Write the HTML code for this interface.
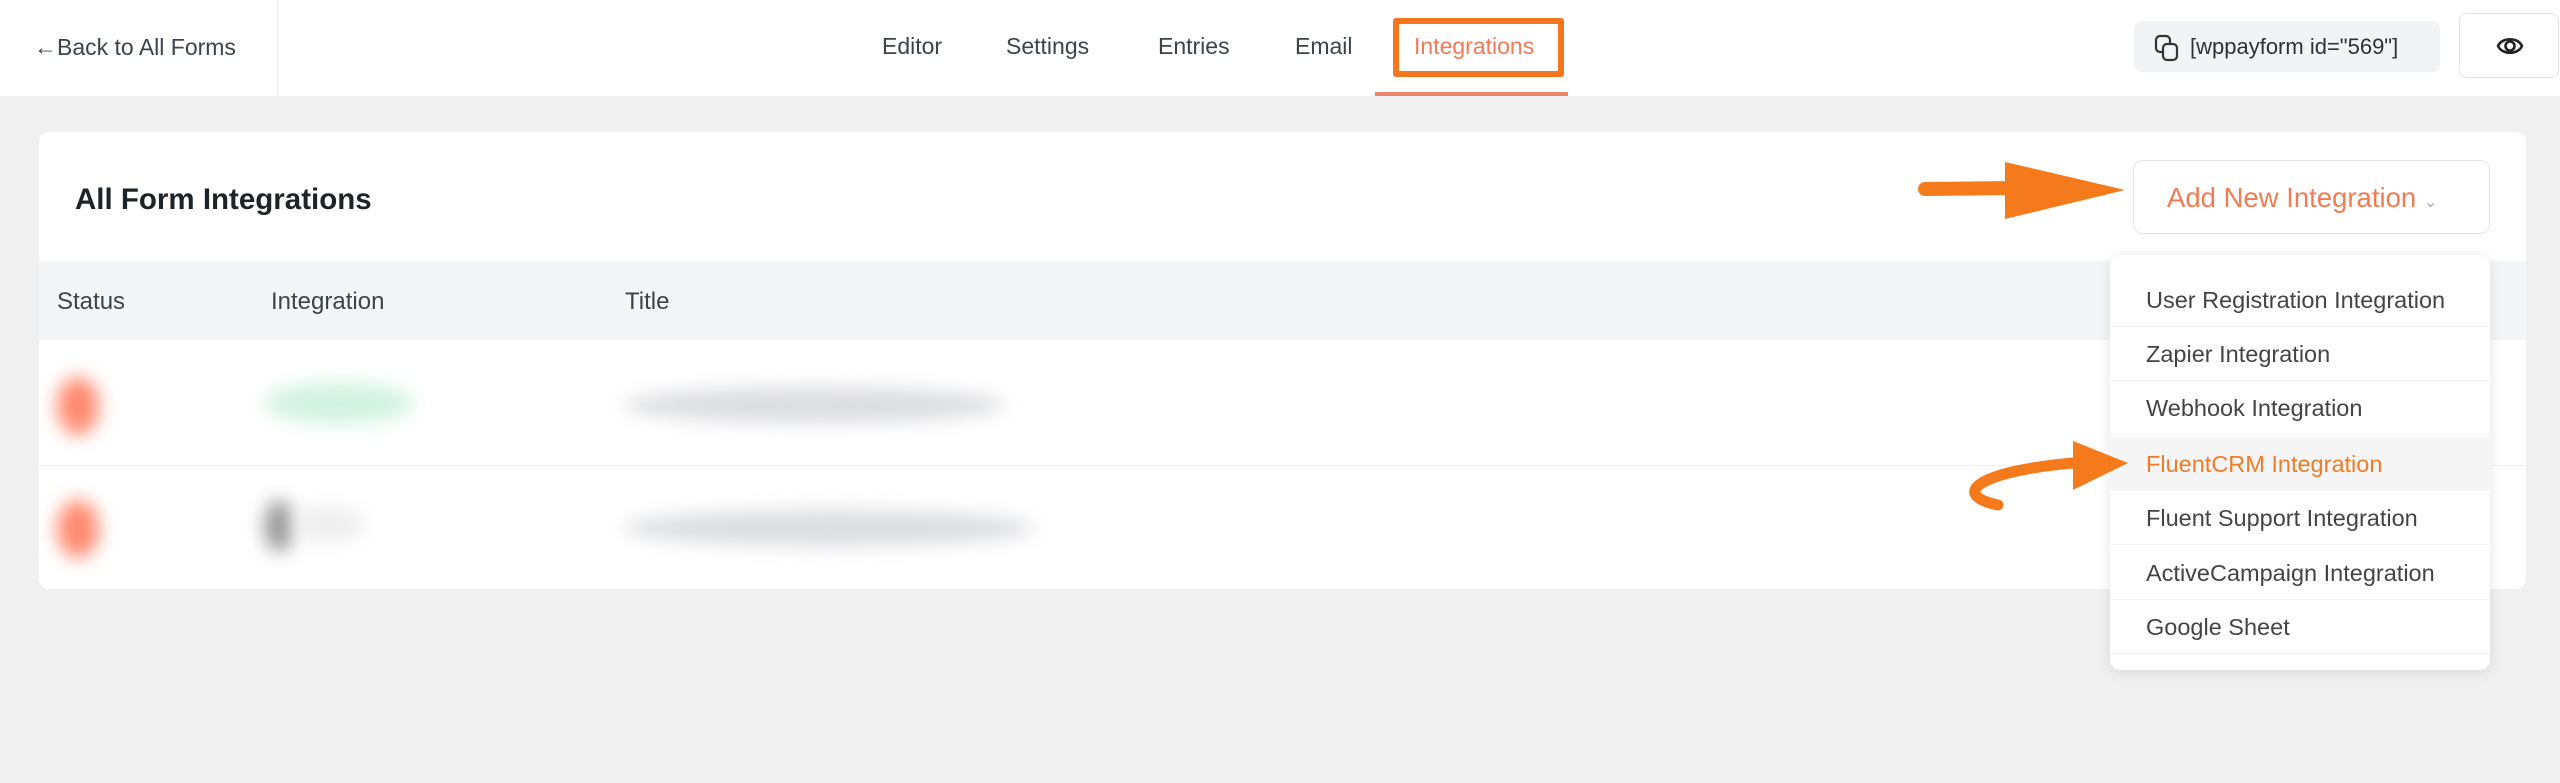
<!DOCTYPE html>
<html><head><meta charset="utf-8"><style>
*{box-sizing:border-box;margin:0;padding:0}
body{width:2560px;height:783px;background:#f0f0f1;font-family:"Liberation Sans",sans-serif;position:relative;overflow:hidden;color:#1e1e1e}
.hdr{position:absolute;left:0;top:0;width:2560px;height:96px;background:#fff}
.back{position:absolute;left:0;top:0;width:278px;height:96px;border-right:1px solid #eee;font-size:23px;color:#3c434a;padding:34px 0 0 34px}
.nav{position:absolute;top:33px;font-size:23px;color:#3c434a}
.box{position:absolute;left:1393px;top:18px;width:171px;height:59px;border:6px solid #f47720;border-radius:3px}
.ul{position:absolute;left:1375px;top:92px;width:193px;height:4px;background:#e9856a}
.sc{position:absolute;left:2134px;top:21px;width:306px;height:51px;background:#f2f3f5;border-radius:8px;font-size:22px;color:#2c3338;padding:13px 0 0 56px}
.eye{position:absolute;left:2459px;top:13px;width:100px;height:65px;border:1px solid #e2e4e7;border-radius:8px;background:#fff}
.card{position:absolute;left:39px;top:132px;width:2487px;height:457px;background:#fff;border-radius:10px;overflow:hidden}
.title{position:absolute;left:36px;top:51px;font-size:29.5px;font-weight:bold;color:#1d2327}
.th{position:absolute;left:0;top:129px;width:100%;height:79px;background:#f4f5f7;font-size:24px;color:#3c434a}
.th span{position:absolute;top:27px}
.div{position:absolute;left:0;top:333px;width:100%;height:1px;background:#eef0f2}
.blur{position:absolute;filter:blur(9px);border-radius:50%}
.btn{position:absolute;left:2133px;top:160px;width:357px;height:74px;border:1px solid #e2e4e7;border-radius:10px;background:#fff;font-size:27.5px;color:#f07c52;padding:21px 0 0 33px}
.dd{position:absolute;left:2110px;top:255px;width:380px;height:415px;background:#fff;border-radius:10px;box-shadow:0 2px 14px rgba(0,0,0,.1)}
.dd div{position:absolute;left:0;width:100%;height:54px;font-size:23.5px;color:#444;padding:14px 0 0 36px;border-bottom:1px solid #f3f3f3}
</style></head><body>
<div class="hdr">
<div class="back">←Back to All Forms</div>
<span class="nav" style="left:882px">Editor</span>
<span class="nav" style="left:1006px">Settings</span>
<span class="nav" style="left:1158px">Entries</span>
<span class="nav" style="left:1295px">Email</span>
<span class="nav" style="left:1414px;color:#ef7a55">Integrations</span>
<div class="box"></div><div class="ul"></div>
<div class="sc"><svg style="position:absolute;left:20px;top:13px" width="26" height="28" viewBox="0 0 26 28" fill="none" stroke="#333" stroke-width="2.2"><rect x="2" y="2" width="14" height="16" rx="4"/><rect x="9" y="10" width="14" height="16" rx="4" fill="#f2f3f5"/></svg>[wppayform id="569"]</div>
<div class="eye"><svg style="position:absolute;left:36px;top:19px" width="28" height="26" viewBox="0 0 28 26" fill="none" stroke="#222" stroke-width="2.6"><path d="M2 13C6 4 22 4 26 13C22 22 6 22 2 13Z"/><circle cx="14" cy="13" r="4.5"/></svg></div>
</div>
<div class="card">
<div class="title">All Form Integrations</div>
<div class="th"><span style="left:18px">Status</span><span style="left:232px">Integration</span><span style="left:586px">Title</span></div>
<div class="div"></div>
<div class="blur" style="left:18px;top:245px;width:42px;height:58px;background:#ff8a6e"></div>
<div class="blur" style="left:225px;top:250px;width:150px;height:42px;background:#d2f3e3"></div>
<div class="blur" style="left:585px;top:255px;width:380px;height:36px;background:#dcdde0"></div>
<div class="blur" style="left:18px;top:368px;width:42px;height:58px;background:#ff8a6e"></div>
<div class="blur" style="left:225px;top:368px;width:30px;height:52px;background:#9a9a9a"></div>
<div class="blur" style="left:255px;top:375px;width:70px;height:35px;background:#eee"></div>
<div class="blur" style="left:585px;top:378px;width:410px;height:36px;background:#dcdde0"></div>
</div>
<div class="btn">Add New Integration <span style="font-size:16px;color:#aaa">&#8964;</span></div>
<div class="dd">
<div style="top:18px">User Registration Integration</div>
<div style="top:72px">Zapier Integration</div>
<div style="top:126px">Webhook Integration</div>
<div style="top:182px;background:#f5f5f5;color:#f07c28">FluentCRM Integration</div>
<div style="top:236px">Fluent Support Integration</div>
<div style="top:291px">ActiveCampaign Integration</div>
<div style="top:345px">Google Sheet</div>
</div>
<svg style="position:absolute;left:0;top:0" width="2560" height="783">
<path d="M1925 189L2015 188" stroke="#f47a1c" stroke-width="14" stroke-linecap="round" fill="none"/>
<path d="M2005 162L2125 190L2005 219Z" fill="#f47a1c"/>
<path d="M1998 505C1950 495 1975 470 2085 462" stroke="#f47a1c" stroke-width="11" stroke-linecap="round" fill="none"/>
<path d="M2073 441L2128 463L2073 490Z" fill="#f47a1c"/>
</svg>
</body></html>
